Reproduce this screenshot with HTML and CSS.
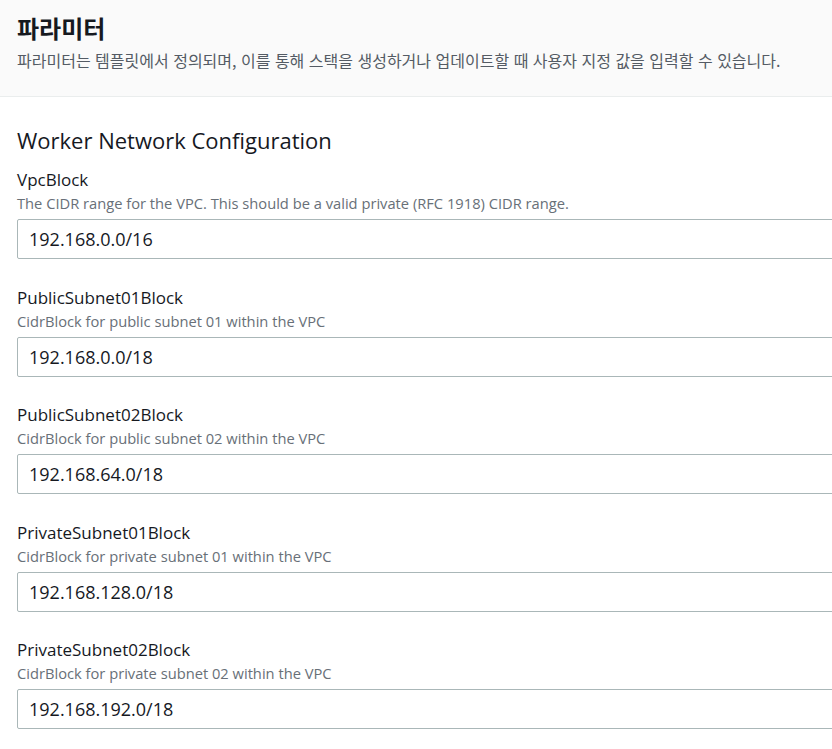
FILE: index.html
```html
<!DOCTYPE html>
<html lang="ko">
<head>
<meta charset="utf-8">
<link rel="stylesheet" href="styles.css">
</head>
<body>
<header class="page-header">
  <h1 class="title">파라미터</h1>
  <p class="subtitle">파라미터는 템플릿에서 정의되며, 이를 통해 스택을 생성하거나 업데이트할 때 사용자 지정 값을 입력할 수 있습니다.</p>
</header>
<main class="content">
  <h2 class="section-title">Worker Network Configuration</h2>
  <div class="field">
    <div class="label">VpcBlock</div>
    <div class="desc">The CIDR range for the VPC. This should be a valid private (RFC 1918) CIDR range.</div>
    <div class="input">192.168.0.0/16</div>
  </div>
  <div class="field">
    <div class="label">PublicSubnet01Block</div>
    <div class="desc">CidrBlock for public subnet 01 within the VPC</div>
    <div class="input">192.168.0.0/18</div>
  </div>
  <div class="field">
    <div class="label">PublicSubnet02Block</div>
    <div class="desc">CidrBlock for public subnet 02 within the VPC</div>
    <div class="input">192.168.64.0/18</div>
  </div>
  <div class="field">
    <div class="label">PrivateSubnet01Block</div>
    <div class="desc">CidrBlock for private subnet 01 within the VPC</div>
    <div class="input">192.168.128.0/18</div>
  </div>
  <div class="field">
    <div class="label">PrivateSubnet02Block</div>
    <div class="desc">CidrBlock for private subnet 02 within the VPC</div>
    <div class="input">192.168.192.0/18</div>
  </div>
</main>
</body>
</html>
```
FILE: styles.css
```css
html, body {
  margin: 0;
  padding: 0;
  background: #ffffff;
  overflow: hidden;
}
body {
  font-family: "Open Sans", "Noto Sans CJK KR", sans-serif;
  color: #16191f;
}
.page-header {
  background: #fafafa;
  border-bottom: 1px solid #eaeded;
  height: 97px;
  box-sizing: border-box;
  padding: 12px 17px 0;
}
.title {
  margin: 0;
  font-family: "Noto Sans CJK KR", sans-serif;
  font-size: 24px;
  font-weight: 700;
  line-height: 32px;
  color: #16191f;
}
.subtitle {
  margin: 6px 0 0;
  font-family: "Noto Sans CJK KR", sans-serif;
  font-size: 16px;
  line-height: 20px;
  color: #545b64;
  white-space: nowrap;
}
.content {
  padding: 27px 17px 0;
  width: 900px;
}
.section-title {
  margin: 0 0 12px;
  font-size: 22px;
  font-weight: 400;
  line-height: 32px;
}
.field {
  display: flex;
  flex-direction: column;
  margin-bottom: 26.5px;
}
.label {
  font-size: 17px;
  line-height: 24px;
}
.desc {
  font-size: 14.7px;
  line-height: 22px;
  color: #687078;
}
.input {
  margin-top: 5px;
  height: 40px;
  box-sizing: border-box;
  border: 1px solid #aab7b8;
  border-radius: 2px;
  padding: 0 11px;
  font-size: 18px;
  line-height: 38px;
}
```
